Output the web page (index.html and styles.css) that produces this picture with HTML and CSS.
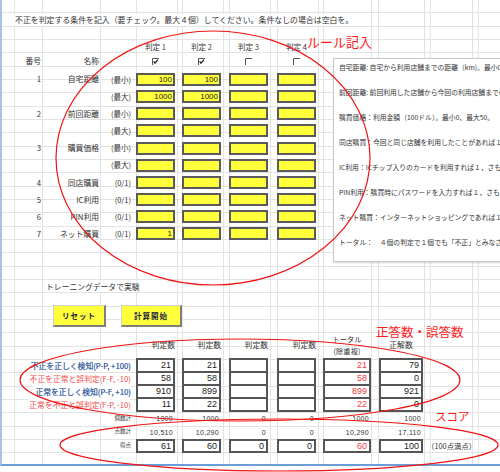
FILE: index.html
```html
<!DOCTYPE html>
<html lang="ja">
<head>
<meta charset="utf-8">
<title>不正判定</title>
<link rel="stylesheet" href="styles.css">
</head>
<body>
<div class="sheet">
  <p class="title"><span>不正を判定する条件を記入（要チェック。最大４個）してください。条件なしの場合は空白を。</span></p>

  <div class="top">
    <div class="form">
      <div class="frow h1">
        <span></span><span></span><span></span><span></span>
        <span class="jl">判定 1</span><span class="jl">判定 2</span><span class="jl">判定 3</span><span class="jl">判定 4</span>
      </div>
      <div class="frow h2">
        <span></span><span class="num">番号</span><span class="name">名称</span><span></span>
        <span class="cb"><svg width="7" height="7" viewBox="0 0 7 7"><path d="M0.5 7V0.5H7" stroke="#555" fill="none"/><path d="M1.6 3.3L3 5.2L5.9 1.6" stroke="#222" stroke-width="1.2" fill="none"/></svg></span>
        <span class="cb"><svg width="7" height="7" viewBox="0 0 7 7"><path d="M0.5 7V0.5H7" stroke="#555" fill="none"/><path d="M1.6 3.3L3 5.2L5.9 1.6" stroke="#222" stroke-width="1.2" fill="none"/></svg></span>
        <span class="cb"><svg width="7" height="7" viewBox="0 0 7 7"><path d="M0.5 7V0.5H7" stroke="#555" fill="none"/></svg></span>
        <span class="cb"><svg width="7" height="7" viewBox="0 0 7 7"><path d="M0.5 7V0.5H7" stroke="#555" fill="none"/></svg></span>
      </div>

      <div class="frow d"><span></span><span class="num">1</span><span class="name">自宅距離</span><span class="unit">(最小)</span><span class="inp">100</span><span class="inp">100</span><span class="inp"></span><span class="inp"></span></div>
      <div class="frow d"><span></span><span class="num"></span><span class="name"></span><span class="unit">(最大)</span><span class="inp">1000</span><span class="inp">1000</span><span class="inp"></span><span class="inp"></span></div>
      <div class="frow d"><span></span><span class="num">2</span><span class="name">前回距離</span><span class="unit">(最小)</span><span class="inp"></span><span class="inp"></span><span class="inp"></span><span class="inp"></span></div>
      <div class="frow d"><span></span><span class="num"></span><span class="name"></span><span class="unit">(最大)</span><span class="inp"></span><span class="inp"></span><span class="inp"></span><span class="inp"></span></div>
      <div class="frow d"><span></span><span class="num">3</span><span class="name">購買価格</span><span class="unit">(最小)</span><span class="inp"></span><span class="inp"></span><span class="inp"></span><span class="inp"></span></div>
      <div class="frow d"><span></span><span class="num"></span><span class="name"></span><span class="unit">(最大)</span><span class="inp"></span><span class="inp"></span><span class="inp"></span><span class="inp"></span></div>
      <div class="frow d"><span></span><span class="num">4</span><span class="name">同店購買</span><span class="unit">(0/1)</span><span class="inp"></span><span class="inp"></span><span class="inp"></span><span class="inp"></span></div>
      <div class="frow d"><span></span><span class="num">5</span><span class="name">IC利用</span><span class="unit">(0/1)</span><span class="inp"></span><span class="inp"></span><span class="inp"></span><span class="inp"></span></div>
      <div class="frow d"><span></span><span class="num">6</span><span class="name">PIN利用</span><span class="unit">(0/1)</span><span class="inp"></span><span class="inp"></span><span class="inp"></span><span class="inp"></span></div>
      <div class="frow d"><span></span><span class="num">7</span><span class="name">ネット購買</span><span class="unit">(0/1)</span><span class="inp">1</span><span class="inp"></span><span class="inp"></span><span class="inp"></span></div>
    </div>

    <div class="panel">
      <p>自宅距離: 自宅から利用店舗までの距離（km)。最小0、最大100。</p>
      <p>前回距離: 前回利用した店舗から今回の利用店舗までの距離（km)。</p>
      <p>購買価格：利用金額（100ドル）。最小0、最大50。</p>
      <p>同店購買：今回と同じ店舗を利用したことがあれば１，さもなくば０。</p>
      <p>IC利用：ICチップ入りのカードを利用すれば１，さもなくば０。</p>
      <p>PIN利用：購買時にパスワードを入力すれば１，さもなくば０。</p>
      <p>ネット購買：インターネットショッピングであれば１，さもなくば０。</p>
      <p>トータル：　４個の判定で１個でも「不正」とみなされた場合。</p>
    </div>
  </div>

  <p class="train"><span>トレーニングデータで実験</span></p>

  <div class="buttons">
    <button class="btn btn-reset" type="button">リセット</button>
    <button class="btn btn-calc" type="button">計算開始</button>
  </div>

  <div class="result">
    <div class="rrow hd">
      <span class="hl"></span>
      <span class="hj">判定数</span><span class="hj">判定数</span><span class="hj">判定数</span><span class="hj">判定数</span>
      <span class="ht">トータル<br>(除重複)</span>
      <span class="hc">正解数</span>
    </div>
    <div class="rrow v first">
      <span class="lbl blue"><span>不正を正しく検知(P-P, +100)</span></span>
      <span class="vb">21</span><span class="vb">21</span><span class="vb"></span><span class="vb"></span><span class="vb total red">21</span><span class="vb correct">79</span>
    </div>
    <div class="rrow v">
      <span class="lbl pink"><span>不正を正常と誤判定(F-F, -10)</span></span>
      <span class="vb">58</span><span class="vb">58</span><span class="vb"></span><span class="vb"></span><span class="vb total red">58</span><span class="vb correct">0</span>
    </div>
    <div class="rrow v">
      <span class="lbl blue"><span>正常を正しく検知(P-F, +10)</span></span>
      <span class="vb">910</span><span class="vb">899</span><span class="vb"></span><span class="vb"></span><span class="vb total red">899</span><span class="vb correct">921</span>
    </div>
    <div class="rrow v">
      <span class="lbl pink"><span>正常を不正と誤判定(F-P, -10)</span></span>
      <span class="vb">11</span><span class="vb">22</span><span class="vb"></span><span class="vb"></span><span class="vb total red">22</span><span class="vb correct">0</span>
    </div>
    <div class="rrow s s1">
      <span class="sl">個数計</span>
      <span class="sv">1000</span><span class="sv">1000</span><span class="sv">0</span><span class="sv">0</span><span class="sv total">1000</span><span class="sv correct">1000</span>
    </div>
    <div class="rrow s s2">
      <span class="sl">点数計</span>
      <span class="sv">10,510</span><span class="sv">10,290</span><span class="sv">0</span><span class="sv">0</span><span class="sv total">10,290</span><span class="sv correct">17,110</span>
    </div>
    <div class="rrow score">
      <span class="sl">得点</span>
      <span class="vb full">61</span><span class="vb full">60</span><span class="vb full">0</span><span class="vb full">0</span><span class="vb full total red">60</span><span class="vb full correct">100</span>
      <span class="max">（100点満点）</span>
    </div>
  </div>
</div>

<svg class="marks" width="500" height="472" viewBox="0 0 500 472" aria-hidden="true">
  <ellipse cx="213" cy="158" rx="157" ry="127"/>
  <ellipse cx="240" cy="380" rx="220" ry="41"/>
  <ellipse cx="279" cy="445" rx="219" ry="26"/>
</svg>
<span class="note note-rule">ルール記入</span>
<span class="note note-count">正答数・誤答数</span>
<span class="note note-score">スコア</span>
</body>
</html>
```

FILE: styles.css
```css
* { box-sizing: border-box; }
html, body { margin: 0; padding: 0; }
body {
  width: 500px;
  height: 472px;
  overflow: hidden;
  position: relative;
  background: #fff;
  color: #333;
  font-family: "Noto Sans CJK JP", "Noto Sans", sans-serif;
  font-size: 7.8px;
  line-height: 1;
}

/* spreadsheet canvas with gridlines */
.sheet {
  height: 466px;
  border-left: 2px solid #a7c4e6;
  border-bottom: 2px solid #6d9dd6;
  background-color: #fff;
  background-image:
    linear-gradient(#e3e3e3, #e3e3e3), linear-gradient(#e3e3e3, #e3e3e3),
    linear-gradient(#e3e3e3, #e3e3e3), linear-gradient(#e3e3e3, #e3e3e3),
    linear-gradient(#e3e3e3, #e3e3e3), linear-gradient(#e3e3e3, #e3e3e3),
    linear-gradient(#e3e3e3, #e3e3e3), linear-gradient(#e3e3e3, #e3e3e3),
    linear-gradient(#e3e3e3, #e3e3e3), linear-gradient(#e3e3e3, #e3e3e3),
    linear-gradient(#e3e3e3, #e3e3e3), linear-gradient(#e3e3e3, #e3e3e3),
    linear-gradient(#e3e3e3, #e3e3e3), linear-gradient(#e3e3e3, #e3e3e3),
    linear-gradient(#e3e3e3, #e3e3e3), linear-gradient(#e3e3e3, #e3e3e3),
    linear-gradient(#e3e3e3, #e3e3e3), linear-gradient(#e3e3e3, #e3e3e3),
    repeating-linear-gradient(to bottom, transparent 0, transparent 12.33px, #e3e3e3 12.33px, #e3e3e3 13.33px);
  background-size:
    1px 100%, 1px 100%, 1px 100%, 1px 100%, 1px 100%, 1px 100%,
    1px 100%, 1px 100%, 1px 100%, 1px 100%, 1px 100%, 1px 100%,
    1px 100%, 1px 100%, 1px 100%, 1px 100%, 1px 100%, 1px 100%,
    100% 100%;
  background-position:
    12px 0, 40px 0, 98px 0, 134px 0, 175px 0, 180px 0,
    221px 0, 227px 0, 268px 0, 275px 0, 316px 0, 321px 0,
    369px 0, 376px 0, 422px 0, 428px 0, 470px 0, 476px 0,
    0 0;
  background-repeat: no-repeat;
}

.title {
  margin: 0;
  height: 40px;
  padding: 14px 0 0 11px;
}
.title span {
  display: inline-block;
  height: 12px;
  line-height: 12px;
  padding: 0 2px;
  background: #fff;
  font-size: 7.9px;
}

/* condition form + description */
.top {
  display: flex;
  height: 222px;
}
.form {
  width: 323px;
  flex: none;
}
.frow {
  display: grid;
  grid-template-columns: 12px 28px 58px 36px 46px 47px 48px 48px;
  align-items: center;
}
.frow.h1 { height: 14px; }
.frow.h2 { height: 16.7px; align-items: start; }
.frow.d { height: 17.2px; }

.jl {
  width: 39px;
  text-align: center;
  font-size: 7.5px;
  line-height: 14px;
}
.h2 .num, .h2 .name { line-height: 14px; }
.cb {
  width: 39px;
  display: flex;
  justify-content: center;
  padding-top: 3.5px;
}
.cb svg { display: block; }

.num { text-align: right; padding-right: 1px; }
.name { text-align: right; padding-right: 1px; }
.unit { text-align: right; padding-right: 5px; font-size: 7.5px; }

.inp {
  width: 39px;
  height: 13px;
  background: #ffff3c;
  border: 2px solid #5a5a5a;
  text-align: right;
  padding-right: 1px;
  font-family: "Liberation Sans", sans-serif;
  font-size: 8px;
  line-height: 9px;
  color: #222;
}

.panel {
  flex: none;
  width: 180px;
  height: 204px;
  margin: 18px 0 0 8px;
  padding: 2px 0 0 5px;
  border: 1px solid #c8c8c8;
  background: #fff;
  box-shadow: 1px 1px 2px rgba(0, 0, 0, 0.18);
  font-size: 6.8px;
  white-space: nowrap;
  overflow: hidden;
  color: #333;
}
.panel p {
  margin: 0 0 13px;
  height: 12px;
  line-height: 12px;
}

.train {
  margin: 18px 0 0;
  padding-left: 43px;
  height: 14px;
  line-height: 14px;
}
.train span { background: #fff; padding: 0 1px; }

.buttons {
  display: flex;
  gap: 15px;
  margin-top: 11px;
  padding-left: 51px;
  height: 22px;
}
.btn {
  height: 22px;
  margin: 0;
  padding: 0;
  background: #ffff3c;
  border: 1px solid #cfcfcf;
  border-right: 2px solid #7e7e7e;
  border-bottom: 2px solid #7e7e7e;
  font-family: "Noto Sans CJK JP", sans-serif;
  font-weight: bold;
  font-size: 7.5px;
  letter-spacing: 1px;
  color: #1e1e3c;
}
.btn-reset { width: 53px; }
.btn-calc { width: 61px; }

/* result table */
.rrow {
  display: grid;
  grid-template-columns: 12px 28px 58px 36px 46px 47px 48px 46px 56px 48px 1fr;
}
.rrow.hd { height: 31px; align-items: end; }
.hl { grid-column: 1 / 5; }
.hj {
  width: 39px;
  text-align: right;
  line-height: 12px;
  margin-bottom: 7px;
}
.ht {
  width: 48px;
  text-align: center;
  line-height: 12px;
  margin-bottom: 1px;
  font-size: 7.3px;
}
.hc {
  width: 44px;
  text-align: center;
  line-height: 12px;
  margin-bottom: 7px;
}

.rrow.v { height: 13px; }
.rrow.v.first { height: 15px; }
.lbl {
  grid-column: 1 / 5;
  align-self: end;
  display: flex;
  justify-content: flex-end;
  padding-right: 5px;
  margin-bottom: 2px;
  line-height: 11px;
  white-space: nowrap;
}
.lbl span { background: #fff; padding-left: 1px; }
.blue { color: #1f5199; -webkit-text-stroke: 0.2px #1f5199; }
.pink { color: #f24a4a; }

.vb {
  width: 39px;
  border: 2px solid #555;
  border-top: none;
  background: #fff;
  text-align: right;
  padding-right: 2px;
  font-family: "Liberation Sans", sans-serif;
  font-size: 9px;
  line-height: 11px;
  color: #222;
}
.first .vb { border-top: 2px solid #555; }
.vb.total { width: 48px; }
.vb.correct { width: 44px; }
.vb.red { color: #f04040; }

.rrow.s { align-items: center; }
.rrow.s1 { height: 13px; }
.rrow.s2 { height: 14px; }
.sl {
  grid-column: 1 / 5;
  text-align: right;
  padding-right: 5px;
  font-size: 5.5px;
}
.sv {
  width: 39px;
  text-align: right;
  padding-right: 2px;
  font-family: "Liberation Sans", sans-serif;
  font-size: 7px;
  letter-spacing: 0.3px;
}
.sv.total { width: 48px; }
.sv.correct { width: 44px; }

.rrow.score { height: 14px; align-items: stretch; }
.rrow.score .sl { align-self: center; }
.vb.full { border-top: 2px solid #555; line-height: 10px; }
.max {
  align-self: center;
  padding-left: 0;
  font-size: 7.4px;
  white-space: nowrap;
}

/* red hand annotations */
.marks {
  position: absolute;
  left: 0;
  top: 0;
  pointer-events: none;
}
.marks ellipse {
  fill: none;
  stroke: #f01414;
  stroke-width: 1.2;
}
.note {
  position: absolute;
  color: #ff1a1a;
  font-family: "Noto Sans CJK JP", sans-serif;
  line-height: 1;
  white-space: nowrap;
}
.note-rule { left: 307px; top: 35px; font-size: 13px; }
.note-count { left: 376px; top: 326px; font-size: 12.5px; }
.note-score { left: 435px; top: 411px; font-size: 11.5px; }
```
